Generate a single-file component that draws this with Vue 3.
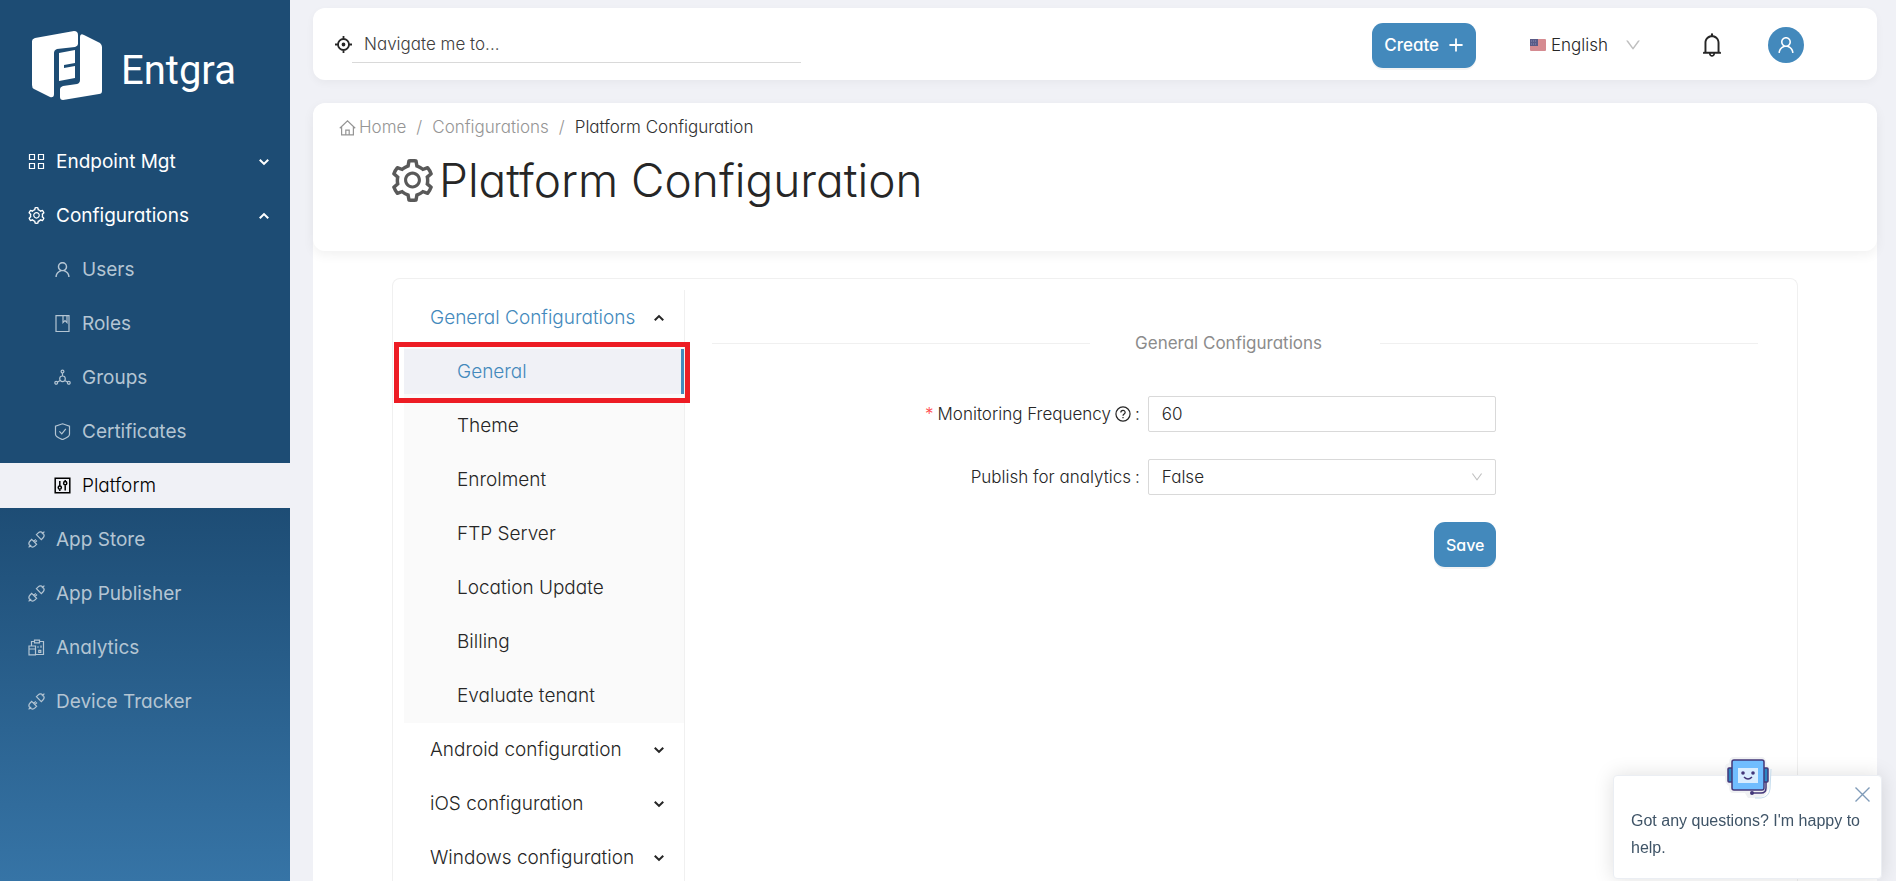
<script setup>
import { h, ref } from 'vue'

const glyphs = {
  user: { d: 'M858.5 763.6a374 374 0 00-80.6-119.5 375.63 375.63 0 00-119.5-80.6c-.4-.2-.8-.3-1.2-.5C719.5 518 760 444.7 760 362c0-137-111-248-248-248S264 225 264 362c0 82.7 40.5 156 102.8 201.1-.4.2-.8.3-1.2.5-44.8 18.9-85 46-119.5 80.6a375.63 375.63 0 00-80.6 119.5A371.7 371.7 0 00136 901.8a8 8 0 008 8.2h60c4.4 0 7.9-3.5 8-7.8 2-77.2 33-149.5 87.8-204.3 56.7-56.7 132-87.9 212.2-87.9s155.5 31.2 212.2 87.9C779 752.7 810 825 812 902.2c.1 4.4 3.6 7.8 8 7.8h60a8 8 0 008-8.2c-1-47.8-10.9-94.3-29.5-138.2zM512 534c-45.9 0-89.1-17.9-121.6-50.4S340 407.9 340 362c0-45.9 17.9-89.1 50.4-121.6S466.1 190 512 190s89.1 17.9 121.6 50.4S684 316.1 684 362c0 45.9-17.9 89.1-50.4 121.6S557.9 534 512 534z', solid: true },
  setting: { d: 'M924.8 625.7l-65.5-56c3.1-19 4.7-38.4 4.7-57.8s-1.6-38.8-4.7-57.8l65.5-56a32.03 32.03 0 009.3-35.2l-.9-2.6a443.74 443.74 0 00-79.7-137.9l-1.8-2.1a32.12 32.12 0 00-35.1-9.5l-81.3 28.9c-30-24.6-63.5-44-99.7-57.6l-15.7-85a32.05 32.05 0 00-25.8-25.7l-2.7-.5c-52.1-9.4-106.9-9.4-159 0l-2.7.5a32.05 32.05 0 00-25.8 25.7l-15.8 85.4a351.86 351.86 0 00-99 57.4l-81.9-29.1a32 32 0 00-35.1 9.5l-1.8 2.1a446.02 446.02 0 00-79.7 137.9l-.9 2.6c-4.5 12.5-.8 26.5 9.3 35.2l66.3 56.6c-3.1 18.8-4.6 38-4.6 57.1 0 19.2 1.5 38.4 4.6 57.1L99 625.5a32.03 32.03 0 00-9.3 35.2l.9 2.6c18.1 50.4 44.9 96.9 79.7 137.9l1.8 2.1a32.12 32.12 0 0035.1 9.5l81.9-29.1c29.8 24.5 63.1 43.9 99 57.4l15.8 85.4a32.05 32.05 0 0025.8 25.7l2.7.5a449.4 449.4 0 00159 0l2.7-.5a32.05 32.05 0 0025.8-25.7l15.7-85a350 350 0 0099.7-57.6l81.3 28.9a32 32 0 0035.1-9.5l1.8-2.1c34.8-41.1 61.6-87.5 79.7-137.9l.9-2.6c4.5-12.3.8-26.3-9.3-35zM788.3 465.9c2.5 15.1 3.8 30.6 3.8 46.1s-1.3 31-3.8 46.1l-6.6 40.1 74.7 63.9a370.03 370.03 0 01-42.6 73.6L721 702.8l-31.4 25.8c-23.9 19.6-50.5 35-79.3 45.8l-38.1 14.3-17.9 97a377.5 377.5 0 01-85 0l-17.9-97.2-37.8-14.5c-28.5-10.8-55-26.2-78.7-45.7l-31.4-25.9-93.4 33.2c-17-22.9-31.2-47.6-42.6-73.6l75.5-64.5-6.5-40c-2.4-14.9-3.7-30.3-3.7-45.5 0-15.3 1.2-30.6 3.7-45.5l6.5-40-75.5-64.5c11.3-26.1 25.6-50.7 42.6-73.6l93.4 33.2 31.4-25.9c23.7-19.5 50.2-34.9 78.7-45.7l37.9-14.3 17.9-97.2c28.1-3.2 56.8-3.2 85 0l17.9 97 38.1 14.3c28.7 10.8 55.4 26.2 79.3 45.8l31.4 25.8 92.8-32.9c17 22.9 31.2 47.6 42.6 73.6L781.8 426l6.5 39.9zM512 326c-97.2 0-176 78.8-176 176s78.8 176 176 176 176-78.8 176-176-78.8-176-176-176zm79.2 255.2A111.6 111.6 0 01512 614c-29.9 0-58-11.7-79.2-32.8A111.6 111.6 0 01400 502c0-29.9 11.7-58 32.8-79.2C454 401.6 482.1 390 512 390c29.9 0 58 11.6 79.2 32.8A111.6 111.6 0 01624 502c0 29.9-11.7 58-32.8 79.2z', solid: true },
  down: { d: 'M884 256h-75c-5.1 0-9.9 2.5-12.9 6.6L512 654.2 227.9 262.6c-3-4.1-7.8-6.6-12.9-6.6h-75c-6.5 0-10.3 7.4-6.5 12.7l352.6 486.1c12.8 17.6 39 17.6 51.7 0l352.6-486.1c3.9-5.3.1-12.7-6.4-12.7z', solid: true },
  bell: { d: 'M816 768h-24V428c0-141.1-104.3-257.7-240-277.1V112c0-22.1-17.9-40-40-40s-40 17.9-40 40v38.9c-135.7 19.4-240 136-240 277.1v340h-24c-17.7 0-32 14.3-32 32v32c0 4.4 3.6 8 8 8h216c0 61.8 50.2 112 112 112s112-50.2 112-112h216c4.4 0 8-3.6 8-8v-32c0-17.7-14.3-32-32-32zM512 888c-26.5 0-48-21.5-48-48h96c0 26.5-21.5 48-48 48zM304 768V428c0-55.6 21.6-107.8 60.9-147.1S456.4 220 512 220c55.6 0 107.8 21.6 147.1 60.9S720 372.4 720 428v340H304z', solid: true },
  grid: { d: 'M1.5 1.5h5v5h-5zM10.5 1.5h5v5h-5zM1.5 10.5h5v5h-5zM10.5 10.5h5v5h-5z' },
  book: { d: 'M2 .6h13v16H2zM9 .6v7l2-2 2 2v-7' },
  cluster: { d: 'M8.5 4v3M6.2 11.5l-2.6 1.6M10.8 11.5l2.6 1.6M8.5 7a2.8 2.8 0 110 5.6 2.8 2.8 0 010-5.6zM8.5 1.2a1.4 1.4 0 110 2.8 1.4 1.4 0 010-2.8zM2.2 12.4a1.4 1.4 0 110 2.8 1.4 1.4 0 010-2.8zM14.8 12.4a1.4 1.4 0 110 2.8 1.4 1.4 0 010-2.8z' },
  shield: { d: 'M8.5.8l7 2.3v8.2c0 2-4 4.2-7 5.3-3-1.1-7-3.3-7-5.3V3.1zM5.4 8.3l2.4 2.6 4-5' },
  control: { d: 'M1.2 1.2h14.6v14.6H1.2zM5.8 4v5M5.8 12.3V14M11.2 3v1.5M11.2 8v5.5M5.8 9a1.6 1.6 0 110 3.2 1.6 1.6 0 010-3.2zM11.2 4.6a1.6 1.6 0 110 3.2 1.6 1.6 0 010-3.2z', w: 1.5 },
  api: { d: 'M.6 16.4l2.6-2.6M13.800 3.2L16.4.6M8.4 3.700l4.900 4.900 1.600-1.600a3.400 3.400 0 00-4.900-4.900zM3.700 8.400l4.900 4.900-1.600 1.600a3.400 3.400 0 01-4.900-4.900zM5.700 10.400l2.100-2.100M6.900 11.600l2.100-2.100' },
  analytics: { d: 'M3.5 7V2.5h3M11.5 2.5h4v13h-8M6.5 1.2h5v2.6h-5zM1 7h6.5v8.8H1zM1 10h6.5M10 7.2v1.6M13 6.5v2.3M10.8 11.4h2v2h-2z' },
  chevdown: { d: 'M4 6l4.500 4.500L13 6', w: 2.2 },
  chevup: { d: 'M4 11l4.500-4.500L13 11', w: 2.2 },
  aim: { d: 'M8.5 0v4M8.5 13v4M0 8.5h4M13 8.5h4M8.5 3a5.5 5.5 0 110 11 5.5 5.5 0 010-11zM8.5 7.500a1 1 0 110 2 1 1 0 010-2z', w: 1.8 },
  home: { d: 'M.8 9.2l7.7-7.4 7.7 7.4M2.6 7.8v8h11.800v-8M6.800 15.800v-4.600h3.400v4.600' },
  question: { d: 'M8.5 1a7.5 7.5 0 110 15 7.5 7.5 0 010-15zM6.2 7c0-3.1 4.6-3.1 4.6-.2 0 1.800-2.300 1.600-2.300 3.600M8.500 11.600v1.500', w: 1.3 },
  plus: { d: 'M8.5 1.500v14M1.500 8.500h14', w: 1.9 },
  close: { d: 'M1.500 1.500l14 14M15.500 1.500l-14 14', w: 1.4 },
}

const Icon = ({ name, size = 17 }) => {
  const g = glyphs[name]
  return h('svg', {
    width: size, height: size, 'aria-hidden': 'true',
    viewBox: g.solid ? '64 64 896 896' : '0 0 17 17',
    fill: g.solid ? 'currentColor' : 'none',
    stroke: g.solid ? 'none' : 'currentColor',
    'stroke-width': g.w || 1.2,
  }, [h('path', { d: g.d })])
}
Icon.props = ['name', 'size']

const nav = [
  { label: 'Endpoint Mgt', icon: 'grid', arrow: 'chevdown', bright: true },
  { label: 'Configurations', icon: 'setting', arrow: 'chevup', bright: true },
  { label: 'Users', icon: 'user', child: true },
  { label: 'Roles', icon: 'book', child: true },
  { label: 'Groups', icon: 'cluster', child: true },
  { label: 'Certificates', icon: 'shield', child: true },
  { label: 'Platform', icon: 'control', child: true, active: true },
  { label: 'App Store', icon: 'api' },
  { label: 'App Publisher', icon: 'api' },
  { label: 'Analytics', icon: 'analytics' },
  { label: 'Device Tracker', icon: 'api' },
]
const sections = ['General', 'Theme', 'Enrolment', 'FTP Server', 'Location Update', 'Billing', 'Evaluate tenant']
const platforms = ['Android configuration', 'iOS configuration', 'Windows configuration']

const current = ref('General')
const frequency = ref('60')
const publish = ref('False')
</script>

<template>
  <div class="app">
    <aside class="sidebar">
      <a class="brand" href="#">
        <svg width="70" height="70" viewBox="0 0 70 70" fill="#fff" aria-hidden="true">
          <path d="M3 7L42 0q4 0 4 4v9q0 2-3 3L25 18q-3 1-3 4v41q0 4-4 3L2 58q-2-1-2-4V10q0-2 3-3z" />
          <path d="M48 6q0-4 4-2l16 8q2 2 2 4v44q0 3-3 3L31 69q-3 0-3-3v-8q0-2 3-3l14-2q3-1 3-4z" />
          <path d="M27 22l16-3v13l-11 2v3l11-2v12l-16 3z" />
        </svg>
        <span class="brand-name">Entgra</span>
      </a>
      <nav class="nav">
        <a v-for="n in nav" :key="n.label" href="#" class="nav-item" :class="{ child: n.child, active: n.active, bright: n.bright }">
          <Icon :name="n.icon" />
          <span class="nav-label">{{ n.label }}</span>
          <Icon v-if="n.arrow" :name="n.arrow" :size="16" />
        </a>
      </nav>
    </aside>

    <main class="main">
      <header class="topbar">
        <div class="search">
          <Icon name="aim" />
          <input type="text" placeholder="Navigate me to..." aria-label="Navigate me to" />
        </div>
        <div class="tools">
          <button type="button" class="primary create">Create <Icon name="plus" :size="16" /></button>
          <div class="language">
            <svg width="16" height="12" viewBox="0 0 16 12" aria-hidden="true">
              <rect width="16" height="12" rx="1" fill="#d58b91" />
              <rect width="8" height="7" fill="#5a5b87" />
              <path d="M1 2h6M1 5h6" stroke="#8f90b4" stroke-dasharray="1 1" />
            </svg>
            <select aria-label="Language"><option>English</option></select>
            <Icon class="arrow" name="down" :size="16" />
          </div>
          <button type="button" class="plain" aria-label="Notifications"><Icon name="bell" :size="24" /></button>
          <button type="button" class="avatar" aria-label="Account"><Icon name="user" :size="18" /></button>
        </div>
      </header>

      <div class="page">
        <section class="heading">
          <nav class="crumbs" aria-label="Breadcrumb">
            <a href="#"><Icon name="home" />Home</a>
            <span class="slash">/</span>
            <a href="#">Configurations</a>
            <span class="slash">/</span>
            <span class="here">Platform Configuration</span>
          </nav>
          <h1><Icon name="setting" :size="43" />Platform Configuration</h1>
        </section>

        <section class="panel">
          <nav class="menu" aria-label="Configuration sections">
            <button type="button" class="menu-item open"><span>General Configurations</span><Icon name="chevup" :size="16" /></button>
            <div class="submenu">
              <button v-for="s in sections" :key="s" type="button" class="menu-item sub" :class="{ selected: s === current }" @click="current = s">{{ s }}</button>
              <div class="marker"></div>
            </div>
            <button v-for="p in platforms" :key="p" type="button" class="menu-item"><span>{{ p }}</span><Icon name="chevdown" :size="16" /></button>
          </nav>

          <div class="detail">
            <h2 class="divider"><span>General Configurations</span></h2>
            <form class="form" @submit.prevent>
              <label for="frequency"><span class="star">*</span><span>Monitoring Frequency</span><Icon name="question" :size="16" /><span>:</span></label>
              <input id="frequency" v-model="frequency" class="field" type="text" />
              <label for="publish"><span>Publish for analytics</span><span>:</span></label>
              <div class="picker">
                <select id="publish" v-model="publish" class="field"><option>False</option><option>True</option></select>
                <Icon class="arrow" name="down" :size="12" />
              </div>
              <button type="submit" class="primary save">Save</button>
            </form>
          </div>
        </section>
      </div>
    </main>

    <div class="chat" role="status">
      <svg class="bot" width="48" height="44" viewBox="0 0 48 44" aria-hidden="true">
        <path d="M9 1h29q4 0 5 8 4 2 3 8v10q0 6-3 8-1 7-11 7h-8l-3-5H8q-3-1-3-7-4-2-4-8V11q0-3 4-4 0-6 4-6z" fill="#f0f1f3" />
        <path d="M31 42h6q8-1 9-9l1-20" fill="none" stroke="#c5dced" stroke-width="1" />
        <rect x="4" y="12" width="6" height="14" rx="1" fill="#2c86c2" stroke="#43377a" stroke-width="1.5" />
        <rect x="38" y="12" width="6" height="14" rx="1" fill="#2c86c2" stroke="#43377a" stroke-width="1.5" />
        <rect x="8" y="4" width="32" height="30" rx="2" fill="#70bdff" stroke="#43377a" stroke-width="1.5" />
        <rect x="14" y="12" width="20" height="15" fill="#d9edff" />
        <circle cx="19" cy="17" r="1.8" fill="#43377a" /><circle cx="29" cy="17" r="1.8" fill="#43377a" />
        <path d="M20 21q4 4 8 0M42 26v6q0 5-5 5h-8" fill="none" stroke="#43377a" stroke-width="1.5" />
        <circle cx="28" cy="37" r="2" fill="#43377a" />
      </svg>
      <button type="button" class="close" aria-label="Close"><Icon name="close" /></button>
      <p>Got any questions? I'm happy to help.</p>
    </div>
  </div>
</template>

<style>
body {
  margin: 0;
  background: #f0f1f6;
}
</style>

<style scoped>
.app {
  display: flex;
  height: 100vh;
  overflow: hidden;
  font-family: Inter, "Open Sans", sans-serif;
  font-feature-settings: "cv11";
  font-size: 17px;
  font-weight: 300;
  color: #262626;
}
* { box-sizing: border-box; }
svg { flex: none; display: block; }
a { color: inherit; text-decoration: none; }
button, input, select {
  font: inherit;
  font-feature-settings: inherit;
  color: inherit;
  margin: 0;
}
button { cursor: pointer; border: 0; background: none; padding: 0; }
select { appearance: none; }

.sidebar {
  flex: none;
  width: 290px;
  padding-top: 31px;
  background: linear-gradient(#1d4c74 57%, #3674a6 100%);
}
.brand {
  display: flex;
  align-items: center;
  gap: 19px;
  margin: 0 0 38px 32px;
}
.brand-name {
  padding-top: 10px;
  font: 400 40px/50px Roboto, sans-serif;
  color: #fff;
}
.nav { display: flex; flex-direction: column; gap: 9px; }
.nav-item {
  display: flex;
  align-items: center;
  gap: 11px;
  height: 45px;
  padding: 0 18px 0 28px;
  color: #b4c5d3;
  font-size: 19px;
  font-weight: 400;
}
.nav-item.child { padding-left: 54px; }
.nav-item.bright { color: #fff; }
.nav-item.active { background: #f0f1f6; color: #000; font-weight: 300; }
.nav-label { flex: 1; }

.main {
  flex: 1;
  display: flex;
  flex-direction: column;
  gap: 23px;
  padding: 8px 19px 0 23px;
  min-width: 0;
}
.topbar {
  flex: none;
  display: flex;
  align-items: center;
  justify-content: space-between;
  height: 72px;
  padding: 0 73px 0 22px;
  background: #fff;
  border-radius: 12px;
  box-shadow: 0 3px 8px #0000000a;
}
.search { display: flex; align-items: center; flex: 0 1 466px; }
.search input {
  flex: 1;
  height: 38px;
  padding: 0 12px;
  border: 0;
  border-bottom: 1px solid #d9d9d9;
  background: none;
  outline: none;
}
.search input::placeholder { color: #404040; opacity: 1; }
.tools { display: flex; align-items: center; padding-top: 2px; }
.primary {
  display: flex;
  align-items: center;
  justify-content: center;
  gap: 9px;
  height: 45px;
  padding: 0 12px;
  border-radius: 11px;
  background: #4389bc;
  color: #fff;
  font-weight: 500;
  box-shadow: 0 2px 0 #0000000b;
}
.language {
  position: relative;
  display: flex;
  align-items: center;
  gap: 5px;
  margin: 0 59px 0 54px;
}
.language select { width: 90px; height: 40px; border: 0; padding: 0; background: none; }
.arrow { position: absolute; right: 0; color: #bfbfbf; pointer-events: none; }
.avatar {
  display: grid;
  place-items: center;
  width: 36px;
  height: 36px;
  margin-left: 44px;
  border-radius: 50%;
  background: #4389bc;
  color: #fff;
}

.page {
  flex: 1;
  display: flex;
  flex-direction: column;
  min-height: 0;
  background: #fff;
  border-radius: 12px 12px 0 0;
}
.heading {
  flex: none;
  height: 148px;
  padding: 12px 26px 0;
  border-radius: 12px;
  box-shadow: 0 4px 12px #0000000f;
}
.crumbs { display: flex; gap: 10px; line-height: 24px; color: #959595; }
.crumbs a { display: flex; align-items: center; gap: 3px; }
.crumbs .here { color: #303030; }
h1 {
  display: flex;
  align-items: center;
  gap: 5px;
  margin: 9px 0 0 52px;
  font-size: 46px;
  line-height: 64px;
  font-weight: 300;
  white-space: nowrap;
}
h1 svg { color: #595959; }

.panel {
  flex: 1;
  display: flex;
  min-height: 0;
  margin: 27px 79px 0;
  padding: 11px 39px 0 11px;
  border: 1px solid #f0f0f0;
  border-bottom: 0;
  border-radius: 8px 8px 0 0;
}
.menu {
  flex: none;
  display: flex;
  flex-direction: column;
  gap: 9px;
  width: 281px;
  padding-top: 5px;
  border-right: 1px solid #f0f0f0;
}
.menu-item {
  flex: none;
  display: flex;
  align-items: center;
  justify-content: space-between;
  height: 45px;
  padding: 0 17px 0 26px;
  font-size: 19px;
  white-space: nowrap;
}
.menu-item.open { color: #4389bc; }
.menu-item.open svg { color: #262626; }
.submenu {
  position: relative;
  display: flex;
  flex-direction: column;
  gap: 9px;
  margin: -5px 0;
  padding: 5px 0;
  background: #fafafa;
}
.menu-item.sub { padding-left: 53px; }
.menu-item.selected { background: #f0f1f6; color: #4389bc; border-right: 3px solid #4389bc; }
.marker {
  position: absolute;
  left: -10px;
  right: -6px;
  top: -2px;
  height: 61px;
  border: 5px solid #ed1c24;
  pointer-events: none;
}

.detail { flex: 1; min-width: 0; padding: 40px 0 0 27px; }
.divider {
  display: flex;
  align-items: center;
  margin: 0 0 40px;
  font-size: 17px;
  line-height: 26px;
  font-weight: 400;
  color: #8c8c8c;
}
.divider::before, .divider::after { content: ""; flex: 1; height: 1px; background: #f0f0f0; }
.divider span { padding: 0 58px 0 45px; }
.form {
  display: grid;
  grid-template-columns: 10fr 8fr 6fr;
  row-gap: 27px;
  align-items: center;
}
.form label {
  grid-column: 1;
  display: flex;
  align-items: center;
  justify-content: flex-end;
  gap: 4px;
  padding-right: 8px;
}
.star { color: #ff4d4f; }
.field {
  width: 100%;
  height: 36px;
  padding: 0 13px;
  border: 1px solid #d9d9d9;
  border-radius: 2px;
  background: #fff;
  outline: none;
}
.picker { position: relative; display: flex; align-items: center; }
.picker .arrow { right: 13px; }
.save { grid-column: 2; justify-self: end; font-size: 16px; }

.chat {
  position: fixed;
  right: 14px;
  bottom: 2px;
  width: 269px;
  padding: 31px 17px 17px;
  background: #fff;
  border: 1px solid #ebeef3;
  border-radius: 4px;
  box-shadow: 0 0 20px #00000021;
  color: #3f5467;
  font: 400 16px/27px "Liberation Sans", Arial, sans-serif;
}
.chat p { margin: 0; }
.bot { position: absolute; top: -20px; left: 110px; }
.close { position: absolute; top: 10px; right: 10px; color: #7f9bb8; }
</style>
